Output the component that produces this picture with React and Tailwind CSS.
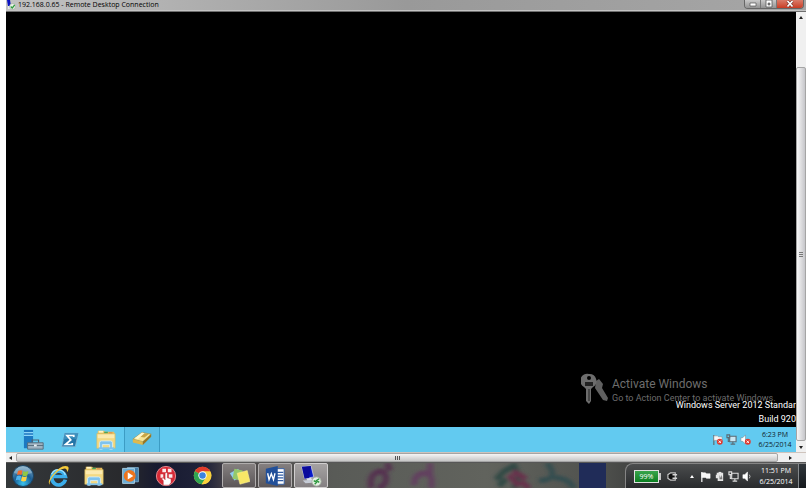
import React from 'react';

function RdpIcon({ className }) {
  return (
    <svg viewBox="0 0 24 24" className={className} aria-hidden="true">
      <path d="M2 2 12 1 15 13 5 15Z" fill="#0719c9" stroke="#dfe6f5" strokeWidth=".7" />
      <path d="M2 2 12 1 10 14 5 15Z" fill="#0b0b9b" />
      <path d="M7 15 12 14 14 17 9 19Z" fill="#dce2ee" />
      <path d="M3 17 14 16 17 19 6 20Z" fill="#c5cbd6" />
      <circle cx="18" cy="18" r="5" fill="#e5efe4" stroke="#a6b5a4" />
      <path d="m15 17 3 2-2 2m5-6-3 2 3 2" fill="none" stroke="#2c973c" strokeWidth="1.5" />
    </svg>
  );
}

function SmallRdpIcon() {
  return (
    <svg viewBox="0 0 10 10" className="size-[10px] shrink-0" aria-hidden="true">
      <path d="M1 0h3l1 6H2Z" fill="#0a12c4" />
      <path d="M2 6h4v3H2Z" fill="#e4e8ee" />
      <circle cx="6.500" cy="6.500" r="3" fill="#e9f2e7" stroke="#8d9a8b" strokeWidth=".5" />
      <path d="m4.700 6.500 1.500 1.500 2.500-3" fill="none" stroke="#2f9a3e" strokeWidth="1.200" />
    </svg>
  );
}

function FolderIcon() {
  return (
    <svg viewBox="0 0 24 24" className="size-[22px]" aria-hidden="true">
      <path d="M3 2h7l1 1h10v5H3Z" fill="#e8c15c" />
      <path d="M4 2h5v2H4Z" fill="#fff3c4" />
      <path d="M10 3h4v2h-4Z" fill="#4ea45a" />
      <path d="M15 4h4v1h-4Z" fill="#d24d42" />
      <path d="M2 5h20v16H2Z" fill="#f3d983" stroke="#d9b75c" strokeWidth=".6" />
      <path d="M3 6h18v4H3Z" fill="#fbeab0" />
      <path d="M5 22v-7q0-2 2-2h10q2 0 2 2v7h-3v-5H8v5Z" fill="#7fc3ee" stroke="#d5f0ff" strokeWidth=".9" />
      <path d="M4 20h17v2H4Z" fill="#7fc3ee" />
    </svg>
  );
}

function ServerIcon() {
  return (
    <svg viewBox="0 0 24 24" className="size-[22px]" aria-hidden="true">
      <path d="M1 1h10v20H1Z" fill="#1c79c2" />
      <path d="M1 4h10M1 7h10" stroke="#8fd4f7" strokeWidth="1.2" />
      <path d="M10 15v-3h7v3" fill="none" stroke="#50606e" strokeWidth="1.3" />
      <path d="M5 15h17v7H5Z" fill="#9eb2c0" stroke="#536b7b" />
      <path d="M5 18h17" stroke="#536b7b" />
      <path d="M12 17h3v2h-3Z" fill="#e7eef2" />
    </svg>
  );
}

function PowerShellIcon() {
  return (
    <svg viewBox="0 0 24 24" className="size-[18px]" aria-hidden="true">
      <path d="M5 3h18l-4 18H1Z" fill="#2475a8" stroke="#8bb9d3" />
      <path d="M5 3h18l-2 8Q12 8 3 12Z" fill="#3b8fbd" />
      <path d="M17 8V6H8l5 6-7 6h9v-2" fill="none" stroke="#fff" strokeWidth="2.3" />
    </svg>
  );
}

function BoxIcon() {
  return (
    <svg viewBox="0 0 24 24" className="size-5" aria-hidden="true">
      <path d="m1 11 11-8 11 2-10 9Z" fill="#f7e596" stroke="#a4822a" strokeWidth=".7" />
      <path d="m9 8 5-4 6 1-5 4Z" fill="#c9a545" />
      <path d="m3 10 9-7 3 1-8 7Z" fill="#fff7cc" />
      <path d="m1 11 12 3v4L1 15Z" fill="#e0b94d" />
      <path d="m13 14 10-9v3l-10 10Z" fill="#9b7722" />
    </svg>
  );
}

function StartOrb() {
  return (
    <svg viewBox="0 0 24 24" className="size-6" aria-hidden="true">
      <defs>
        <radialGradient id="orb" cx=".5" cy=".85" r=".85">
          <stop offset="0" stopColor="#38c3ef" />
          <stop offset=".5" stopColor="#1b5e94" />
          <stop offset="1" stopColor="#7ea6bf" />
        </radialGradient>
      </defs>
      <circle cx="12" cy="12" r="10.5" fill="url(#orb)" stroke="#194261" />
      <path d="M3 9Q6 2 12 2.300t9 6.700Q12 12 3 9Z" fill="#c8dfe9" opacity=".4" />
      <path d="M7 7q2-1.500 4.500-.4l-1 4.500Q8 10 6 11.300Z" fill="#f26b2b" />
      <path d="M12.300 7q2.500 1.300 5-.1l-1 4.500q-2.500 1.500-5 .1Z" fill="#91c843" />
      <path d="M5.700 12.200q2-1.400 4.500-.2l-1 4.500q-2.400-1.300-4.500 0Z" fill="#4eb4ef" />
      <path d="M11 12.300q2.500 1.300 5 0l-1 4.500q-2.500 1.400-5 0Z" fill="#fdd143" />
    </svg>
  );
}

function ExplorerIcon() {
  return (
    <svg viewBox="0 0 24 24" className="size-[22px]" aria-hidden="true">
      <path d="M20 16A7.500 7.500 0 1 1 20 12.500H7" fill="none" stroke="#3badea" strokeWidth="4" />
      <path d="M20 11A8 8 0 0 0 5 10" fill="none" stroke="#9be2ff" strokeWidth="1.500" />
      <path d="M4 22Q-1 20 6 11 14 1 20 1t2 7Q22 3 18 4 12 5 6 13 1 20 4 22Z" fill="#f6ca3b" />
    </svg>
  );
}

function MediaIcon() {
  return (
    <svg viewBox="0 0 24 24" className="size-[19px]" aria-hidden="true">
      <path d="M8 2h14v18H8Z" fill="#447da9" stroke="#87b7d4" />
      <path d="M2 3h15v19H2Z" fill="#6cadd5" stroke="#b9dbec" />
      <circle cx="11" cy="12.500" r="7.500" fill="#ed741d" />
      <path d="m8.500 8 7 4.500-7 4.500Z" fill="#fff" />
    </svg>
  );
}

function TouchIcon() {
  return (
    <svg viewBox="0 0 24 24" className="size-[22px]" aria-hidden="true">
      <circle cx="12" cy="12" r="10.500" fill="#d72a36" stroke="#ed9297" />
      <path d="M8 4h4v4H8Zm6 0h4v4h-4ZM6 10h3v4H6Zm9 0h4v4h-4Z" fill="#fff" opacity=".9" />
      <path d="M9 22v-5l-2-2 2-1 2 2V9q1.500-1.500 2.500 0v5l4 1v4l-2 3Z" fill="#fff" stroke="#a92029" strokeWidth=".5" />
    </svg>
  );
}

function ChromeIcon() {
  return (
    <svg viewBox="0 0 24 24" className="size-[19px]" aria-hidden="true">
      <circle cx="12" cy="12" r="11" fill="#f9d13d" />
      <path d="M12 12 2.500 6.500A11 11 0 0 1 22 7H12Z" fill="#df3b2c" />
      <path d="M12 12 2.500 6.500A11 11 0 0 0 11 23l5-8Z" fill="#30a552" />
      <path d="M12 7h10a11 11 0 0 1-11 16l5-8Z" fill="#f9d13d" />
      <circle cx="12" cy="12" r="5.300" fill="#fff" />
      <circle cx="12" cy="12" r="4.100" fill="#3c82df" />
    </svg>
  );
}

function NotesIcon() {
  return (
    <svg viewBox="0 0 24 24" className="size-[22px]" aria-hidden="true">
      <path d="m2 9 9-5 5 8-9 5Z" fill="#8ecaed" />
      <path d="m7 4 9 2-2 11-9-2Z" fill="#94c86a" />
      <path d="m10 9 11-3 3 12-11 3Z" fill="#f7e767" stroke="#fff5a0" strokeWidth=".5" />
    </svg>
  );
}

function WordIcon() {
  return (
    <svg viewBox="0 0 24 24" className="size-[22px]" aria-hidden="true">
      <path d="M12 4h10v17H12Z" fill="#fff" stroke="#315da5" />
      <path d="M14 8h7m-7 3h7m-7 3h7m-7 3h7" stroke="#315da5" strokeWidth="1.200" />
      <path d="m2 4 13-3v22L2 20Z" fill="#214f99" />
      <path d="m4 9 1.500 7L8 9.500l2.300 6.500L12 9" fill="none" stroke="#fff" strokeWidth="1.500" />
    </svg>
  );
}

function KeysIcon() {
  return (
    <svg viewBox="0 0 28 32" className="h-8 w-7 shrink-0" aria-hidden="true">
      <path d="m15 8 3-2 4 5-1 4 6 10-1 3-4-1-8-12Z" fill="#606060" />
      <path fillRule="evenodd" d="M8 1a7 7 0 0 1 4 13l-2 2v12l-2 3-3-3V16l-2-2A7 7 0 0 1 8 1Zm0 2a2 2 0 1 0 0 4 2 2 0 0 0 0-4Z" fill="#6d6d6d" />
      <path d="M4 9h8v4H4Z" fill="#222" />
      <path d="M8 16v12" stroke="#222" strokeWidth="1" />
    </svg>
  );
}

function FlagIcon({ error }) {
  return (
    <svg viewBox="0 0 12 12" className="size-[11px]" aria-hidden="true">
      <path d="M2 1v11" stroke={error ? '#606a70' : '#fff'} strokeWidth="1.300" />
      <path d="M2 2h4l1 1h4v5H7L6 7H2Z" fill="#f7f7f7" stroke={error ? '#7c878d' : '#fff'} strokeWidth=".6" />
      {error && <ErrorBadge />}
    </svg>
  );
}

function ErrorBadge() {
  return (
    <g>
      <circle cx="8.500" cy="8.500" r="3.200" fill="#df392f" />
      <path d="m7.200 7.200 2.600 2.600m0-2.600L7.200 9.800" stroke="#fff" strokeWidth="1" />
    </g>
  );
}

function NetworkIcon({ color, fill }) {
  return (
    <svg viewBox="0 0 12 12" className="size-[11px]" aria-hidden="true">
      <path d="M4 2.500h7v6H4Z" fill={fill} stroke={color} strokeWidth="1.200" />
      <path d="M7.500 8.500v2M5 11h5M1 1h3v3H1Zm1.500 3v4H4" fill="none" stroke={color} strokeWidth="1.200" />
    </svg>
  );
}

function SpeakerIcon({ error }) {
  return (
    <svg viewBox="0 0 12 12" className="size-[11px]" aria-hidden="true">
      <path d="M1 4h2l3-3v10L3 8H1Z" fill="#fff" stroke={error ? '#7c878d' : '#fff'} strokeWidth=".6" />
      {error ? <ErrorBadge /> : <path d="M8 4q1.500 2 0 4" fill="none" stroke="#ccc" />}
    </svg>
  );
}

function BatteryTrayIcon() {
  return (
    <svg viewBox="0 0 12 12" className="size-[11px]" aria-hidden="true">
      <path d="M3 2h7v9H4V8H2V4h1Z" fill="#e4e4e4" />
      <path d="M5 1h3v1H5Z" fill="#fff" />
      <path d="M6 5h3v4H6Z" fill="#777" />
      <path d="M7 4v3M9 4v3" stroke="#fff" strokeWidth=".8" />
    </svg>
  );
}

function PlugIcon() {
  return (
    <svg viewBox="0 0 12 12" className="size-[11px]" aria-hidden="true">
      <path d="M4 2h5v8H4L1 8V4Z" fill="#111" stroke="#c5c5c5" strokeWidth="1.300" />
      <path d="M6 4h5M6 8h5" stroke="#d5d5d5" strokeWidth="1.600" />
    </svg>
  );
}

function Arrow({ d }) {
  return (
    <svg viewBox="0 0 8 8" className="size-2" aria-hidden="true">
      <path d={d} fill="#222" />
    </svg>
  );
}

function TitleBar() {
  return (
    <header className="flex h-3 shrink-0 items-start border-b border-[#6f6f6f] bg-linear-to-r from-[#c2c2c2] via-[#999] to-[#a6a6a6] shadow-[inset_0_-1px_0_#c4c4c4]">
      <SmallRdpIcon />
      <h1 className="ml-[2px] flex-1 text-[7px] leading-[10px] text-black">192.168.0.65 - Remote Desktop Connection</h1>
      <div className="mr-[2px] flex h-[9px] overflow-hidden rounded-b-sm border border-t-0 border-[#666]">
        <button aria-label="Minimize" className="flex w-4 items-center justify-center border-r border-[#777] bg-linear-to-b from-[#c9c9c9] to-[#939393]">
          <svg viewBox="0 0 8 8" className="size-2"><path d="M1 3h6v3H1Z" fill="#fff" stroke="#555" strokeWidth=".7" /></svg>
        </button>
        <button aria-label="Maximize" className="flex w-4 items-center justify-center border-r border-[#777] bg-linear-to-b from-[#c9c9c9] to-[#939393]">
          <svg viewBox="0 0 8 8" className="size-2"><path d="M1 0h6v7H1Z" fill="#fff" stroke="#555" strokeWidth=".8" /><path d="M3 3h2v2H3Z" fill="#888" stroke="#555" strokeWidth=".6" /></svg>
        </button>
        <button aria-label="Close" className="flex w-[26px] items-center justify-center bg-linear-to-b from-[#d97b69] to-[#c93a22]">
          <svg viewBox="0 0 8 8" className="size-2"><path d="m1.500 1 5 5.500m0-5.500-5 5.500" stroke="#6c2b24" strokeWidth="2.800" /><path d="m1.500 1 5 5.500m0-5.500-5 5.500" stroke="#fff" strokeWidth="1.800" /></svg>
        </button>
      </div>
    </header>
  );
}

function RemoteDesktop() {
  return (
    <main className="relative min-h-0 flex-1 overflow-hidden bg-black font-['Roboto',sans-serif]">
      <div className="absolute right-0 bottom-[22px] flex w-[215px] items-start gap-[3px] text-[#6d6d6d]">
        <KeysIcon />
        <div className="pt-[3px] whitespace-nowrap">
          <p className="text-[12px] leading-4">Activate Windows</p>
          <p className="text-[9px] leading-3">Go to Action Center to activate Windows.</p>
        </div>
      </div>
      <div className="absolute right-0 bottom-px text-right text-[9px] leading-[14px] whitespace-nowrap text-white">
        <p>Windows Server 2012 Standar</p>
        <p>Build 920</p>
      </div>
    </main>
  );
}

function RemoteTaskbar() {
  const cell = 'flex w-9 items-center justify-center';
  return (
    <nav aria-label="Remote taskbar" className="flex h-[25px] shrink-0 items-stretch bg-[#62caf0] pl-[10px]">
      <button aria-label="Server Manager" className={cell}><ServerIcon /></button>
      <button aria-label="PowerShell" className={cell}><PowerShellIcon /></button>
      <button aria-label="File Explorer" className={cell}><FolderIcon /></button>
      <button aria-label="Package" className="flex w-9 items-center justify-center border-x border-[#3c9cc4] bg-[#5bbfe6]"><BoxIcon /></button>
      <div className="ml-auto flex items-center gap-[3px]">
        <button aria-label="Action Center"><FlagIcon error /></button>
        <button aria-label="Network"><NetworkIcon color="#5b6a72" fill="#c9e6f2" /></button>
        <button aria-label="Sound"><SpeakerIcon error /></button>
      </div>
      <button className="mr-[3px] ml-[6px] w-9 text-center text-[7px] leading-[10px] text-[#10222b]">
        <span className="block">6:23 PM</span>
        <span className="block">6/25/2014</span>
      </button>
    </nav>
  );
}

function VerticalScroll() {
  return (
    <div className="flex w-[10px] shrink-0 flex-col bg-[#f0f0f0]">
      <button aria-label="Scroll up" className="flex h-[11px] items-center justify-center"><Arrow d="m4 2 2 3H2Z" /></button>
      <div className="flex-1" />
      <div className="flex h-[85%] flex-col items-center justify-center gap-px rounded-xs border border-[#a5a5a5] bg-linear-to-r from-[#f7f7f7] to-[#c6c6ca]">
        <span className="h-px w-1 bg-[#777]" /><span className="h-px w-1 bg-[#777]" /><span className="h-px w-1 bg-[#777]" />
      </div>
      <button aria-label="Scroll down" className="flex h-[11px] items-center justify-center"><Arrow d="M2 3h4L4 6Z" /></button>
    </div>
  );
}

function HorizontalScroll() {
  return (
    <div className="flex h-[10px] shrink-0 items-stretch border-t border-[#cfc4bd] bg-[#f0f0f0] pr-1">
      <button aria-label="Scroll left" className="flex w-[10px] items-center justify-center"><Arrow d="M5 2v4L2 4Z" /></button>
      <div className="flex flex-1 items-center justify-center gap-px rounded-xs border border-[#a5a5a5] bg-linear-to-b from-[#f5f5f5] to-[#c6c6c6]">
        <span className="h-1 w-px bg-[#555]" /><span className="h-1 w-px bg-[#555]" /><span className="h-1 w-px bg-[#555]" />
      </div>
      <button aria-label="Scroll right" className="flex w-6 items-center justify-center"><Arrow d="M3 2v4l3-2Z" /></button>
    </div>
  );
}

function Wallpaper() {
  return (
    <svg viewBox="0 0 800 27" preserveAspectRatio="none" className="absolute inset-0 size-full" aria-hidden="true">
      <defs>
        <linearGradient id="glass">
          <stop offset="0" stopColor="#34383a" />
          <stop offset=".15" stopColor="#28292c" />
          <stop offset=".19" stopColor="#171a30" />
          <stop offset=".25" stopColor="#20233a" />
          <stop offset=".28" stopColor="#4b4648" />
          <stop offset=".41" stopColor="#595b57" />
          <stop offset=".6" stopColor="#61635d" />
          <stop offset=".74" stopColor="#50524e" />
          <stop offset=".8" stopColor="#3d3e3e" />
          <stop offset="1" stopColor="#2d3034" />
        </linearGradient>
        <filter id="soft"><feGaussianBlur stdDeviation="2" /></filter>
      </defs>
      <path d="M0 0h800v27H0Z" fill="url(#glass)" />
      <g filter="url(#soft)" fill="none" strokeWidth="6">
        <path d="M365 27q-2-13 6-17t9 7q0 7-8 10M381 0l3 8" stroke="#54304f" />
        <path d="M408 24q0-12 10-13t7 16m-1-27v14" stroke="#62405f" />
        <path d="m490 18 8-9 10-6 5 11-5 13M493 25l7-8" stroke="#304845" />
        <path d="m503 13 10 12m-6-16 13 8m-5 3 8 7" stroke="#68304c" />
        <path d="M541 0q14 18-8 19m15-3q14 0 20 11" stroke="#354e50" />
      </g>
      <path d="M573 0h27v27h-27Z" fill="#202c58" />
    </svg>
  );
}

function HostTaskbar() {
  const cell = 'flex w-9 items-center justify-center';
  const open = 'flex w-[34px] items-center justify-center rounded-xs border border-[#b0adad] bg-linear-to-b from-[#858080] to-[#5b5658]';
  return (
    <footer className="relative h-[26px] shrink-0 border-t border-[#575757]">
      <Wallpaper />
      <nav aria-label="Taskbar" className="relative flex h-full">
        <button aria-label="Start" className="flex w-[34px] items-center justify-center"><StartOrb /></button>
        <button aria-label="Internet Explorer" className={cell}><ExplorerIcon /></button>
        <button aria-label="Windows Explorer" className={cell}><FolderIcon /></button>
        <button aria-label="Media Player" className={cell}><MediaIcon /></button>
        <button aria-label="Touch" className={cell}><TouchIcon /></button>
        <button aria-label="Chrome" className={cell}><ChromeIcon /></button>
        <div className="ml-[2px] flex gap-[2px]">
          <button aria-label="Sticky Notes" className={open}><NotesIcon /></button>
          <button aria-label="Word" className={open}><WordIcon /></button>
          <button aria-label="Remote Desktop" className="flex w-[34px] items-center justify-center rounded-xs border border-[#d0cece] bg-linear-to-b from-[#a5a2a2] to-[#848082]"><RdpIcon className="size-[22px]" /></button>
        </div>
        <div className="ml-auto flex items-center rounded-tl-lg border-t border-l border-[#858585] bg-linear-to-b from-[#4b4d4e] to-[#292b2d] pl-2 text-white">
          <div className="flex h-[13px] w-[25px] items-center justify-center border border-[#e0e0e0] bg-linear-to-b from-[#38a54b] to-[#087f20] text-[7px] leading-none">99%</div>
          <span className="mr-[6px] h-[7px] w-[2px] bg-[#c5c5c5]" />
          <PlugIcon />
          <div className="ml-2 flex items-center gap-[3px]">
            <button aria-label="Show hidden icons" className="flex size-[11px] items-center justify-center">
              <svg viewBox="0 0 8 8" className="size-2"><path d="m4 3 2 3H2Z" fill="#fff" /></svg>
            </button>
            <button aria-label="Action Center"><FlagIcon /></button>
            <button aria-label="Power"><BatteryTrayIcon /></button>
            <button aria-label="Network"><NetworkIcon color="#ddd" fill="none" /></button>
            <button aria-label="Sound"><SpeakerIcon /></button>
          </div>
          <button className="ml-[5px] w-9 text-center text-[7px] leading-[11px]">
            <span className="block">11:51 PM</span>
            <span className="block">6/25/2014</span>
          </button>
          <button aria-label="Show desktop" className="ml-1 w-[8px] self-stretch border-l border-[#85898c] bg-linear-to-b from-[#30363b] to-[#15191d]" />
        </div>
      </nav>
    </footer>
  );
}

export default function App() {
  return (
    <div className="flex h-screen flex-col overflow-hidden bg-white pr-1 pb-px pl-[6px] font-['Open_Sans','Noto_Sans',sans-serif]">
      <TitleBar />
      <div className="flex min-h-0 flex-1">
        <div className="flex min-w-0 flex-1 flex-col">
          <RemoteDesktop />
          <RemoteTaskbar />
        </div>
        <VerticalScroll />
      </div>
      <HorizontalScroll />
      <HostTaskbar />
    </div>
  );
}
